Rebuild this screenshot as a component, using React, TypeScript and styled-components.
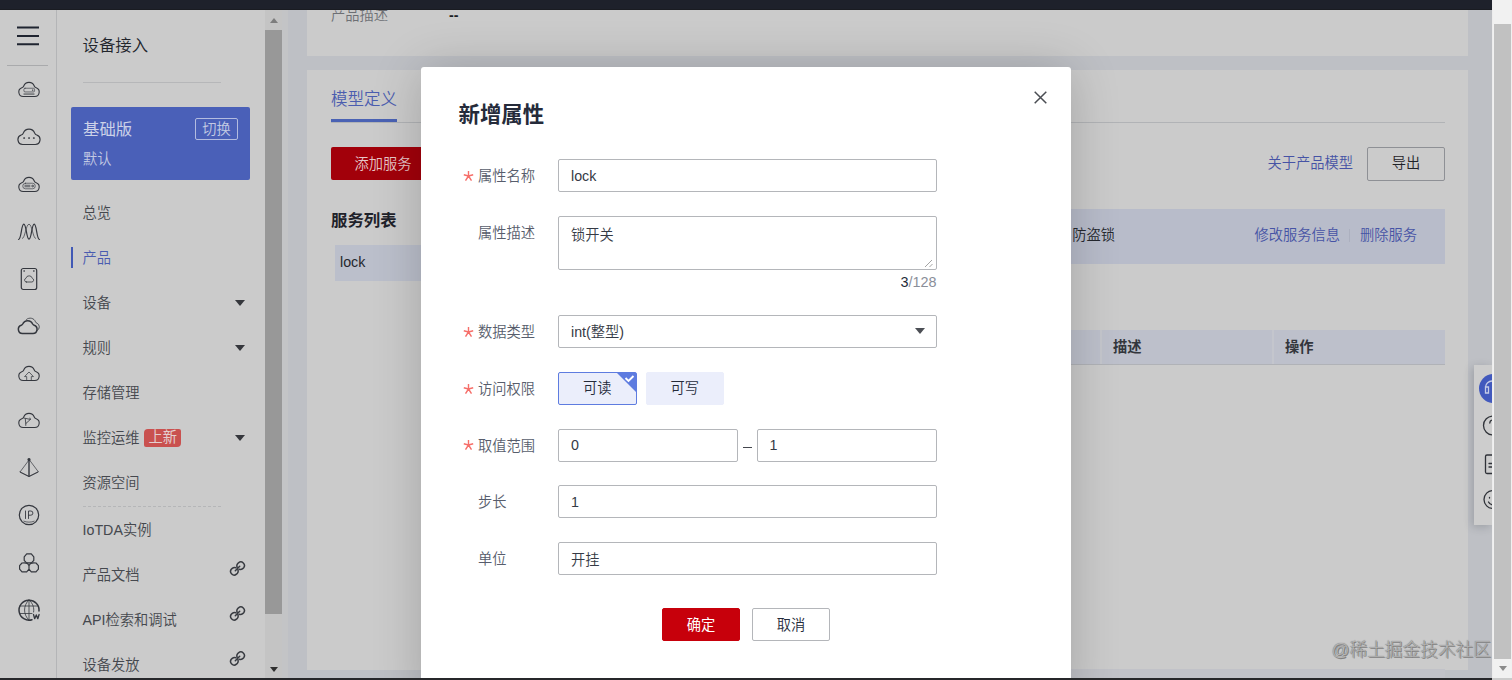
import React from 'react';
import styled, { createGlobalStyle, css } from 'styled-components';

const Global = createGlobalStyle`
  * { box-sizing: border-box; }
  body {
    margin: 0;
    overflow: hidden;
    background: #cbcbcb;
    font-family: 'Liberation Sans', 'Noto Sans CJK SC', sans-serif;
    font-size: 14.25px;
    font-weight: 350;
    color: #3c3f45;
  }
  button, input, textarea { font: inherit; color: inherit; }
`;

const Screen = styled.div`
  position: relative;
  display: flex;
  width: 1512px;
  height: 680px;
  overflow: hidden;
`;

const Page = styled.div`
  display: flex;
  flex-direction: column;
  width: 1492px;
`;

const TopBar = styled.header`
  flex: none;
  height: 10px;
  background: #1e212b;
  border-bottom: 1px solid #1a1c22;
`;

const Body = styled.div`
  display: flex;
  height: 668px;
  overflow: hidden;
`;

const BottomEdge = styled.div`
  flex: none;
  height: 2px;
  background: #26272a;
`;

/* Icon rail */

const Rail = styled.nav`
  flex: none;
  display: flex;
  flex-direction: column;
  align-items: center;
  width: 57px;
  padding-right: 1px;
  border-right: 1px solid #b4b5b7;
`;

const RailToggle = styled.div`
  display: flex;
  justify-content: center;
  width: 41px;
  height: 56px;
  margin-bottom: 0.5px;
  padding-top: 16px;
  border-bottom: 1px solid #a9aaac;
`;

const RailItem = styled.div`
  flex: none;
  display: flex;
  align-items: center;
  justify-content: center;
  height: 47.25px;
  padding-left: 3px;
  color: #34373e;
`;

/* Side menu */

const Side = styled.aside`
  flex: none;
  width: 208px;
  overflow: hidden;
`;

const SideTitle = styled.h1`
  height: 73px;
  width: 138px;
  margin: 0 0 24px 25.5px;
  border-bottom: 1px solid #b6b7b9;
  font-size: 16.4px;
  font-weight: 350;
  line-height: 71px;
  color: #22252c;
`;

const Instance = styled.div`
  display: flex;
  justify-content: space-between;
  width: 179px;
  height: 73px;
  margin: 0 0 10px 14px;
  padding: 10px 12px 0;
  border-radius: 2px;
  background: #4a60b8;
  color: #c3cae3;
`;

const InstanceName = styled.div`
  font-size: 16.4px;
  font-weight: 400;
  line-height: 25px;
  color: #ccd2e8;
`;

const InstanceSub = styled.div`
  line-height: 35px;
`;

const Switch = styled.button`
  width: 43px;
  height: 22px;
  margin-top: 1px;
  padding: 0;
  border: 1px solid #b3bce0;
  border-radius: 2px;
  background: none;
  line-height: 20px;
`;

const MenuItem = styled.div<{ $active?: boolean }>`
  display: flex;
  align-items: center;
  height: 45px;
  padding: 0 20px 3px 25.5px;
  color: #45484e;
  white-space: nowrap;
  ${(p) =>
    p.$active &&
    css`
      color: #4a5cb0;
      padding-left: 14px;
      &::before {
        content: '';
        width: 2px;
        height: 21px;
        margin: 2px 9.5px 0 0;
        background: #4159b5;
      }
    `}
`;

const MenuTail = styled.span`
  display: flex;
  margin-left: auto;
  padding-top: 3px;
`;

const Caret = styled.i`
  border: 5px solid transparent;
  border-top: 6px solid #35373c;
  border-bottom: 0;
`;

const NewTag = styled.span`
  height: 18px;
  margin: 3px 0 0 4px;
  padding: 0 4px 0 5px;
  border-radius: 4px 2px 4px 2px;
  background: #c9514f;
  color: #e4cfcf;
  font-weight: 400;
  line-height: 17px;
`;

const MenuDivider = styled.div`
  width: 138px;
  margin: 1px 0 0 26px;
  border-top: 1px dashed #b5b6b8;
`;

const SideScroll = styled.div`
  flex: none;
  display: flex;
  flex-direction: column;
  align-items: center;
  width: 17px;
  padding: 8px 0 6px;
  background: #c4c4c4;
`;

const Thumb = styled.div`
  width: 17px;
  height: 584px;
  margin: 7px 0 auto;
  background: #989898;
`;

const ScrollArrow = styled.i<{ $up?: boolean; $color: string }>`
  border: 4.5px solid transparent;
  ${(p) =>
    p.$up
      ? css`border-bottom: 5px solid ${p.$color}; border-top: 0;`
      : css`border-top: 5px solid ${p.$color}; border-bottom: 0;`}
`;

/* Content */

const Content = styled.main`
  flex: 1;
  display: flex;
  flex-direction: column;
  gap: 14px;
  padding: 0 24px 0 19px;
  border-left: 6px solid #c3c4c6;
  background: #bec0c5;
`;

const Summary = styled.section`
  flex: none;
  display: flex;
  gap: 61px;
  height: 46px;
  padding-left: 24px;
  overflow: hidden;
  background: #cbcbcb;
  line-height: 20px;
  color: #6d6f74;
`;

const SummaryText = styled.span<{ $dark?: boolean }>`
  margin-top: -5px;
  ${(p) => p.$dark && css`color: #1c1e24; font-weight: 700;`}
`;

const ModelCard = styled.section`
  flex: none;
  height: 600px;
  padding: 0 23px 0 24px;
  background: #cbcbcb;
`;

const Tabs = styled.div`
  display: flex;
  height: 53px;
  border-bottom: 1px solid #b1b3b6;
`;

const Tab = styled.div`
  height: 52px;
  border-bottom: 3px solid #4a62b4;
  font-size: 16.5px;
  line-height: 58px;
  color: #4b5daf;
`;

const ToolRow = styled.div`
  display: flex;
  align-items: center;
  height: 33px;
  margin-top: 24px;
`;

const AddButton = styled.button`
  width: 106px;
  height: 33px;
  padding: 0 2px 3px 0;
  border: 0;
  border-radius: 2px;
  background: #a2000a;
  color: #e6c6c8;
`;

const Link = styled.a<{ $push?: boolean }>`
  margin-left: ${(p) => (p.$push ? 'auto' : 0)};
  padding-bottom: 4px;
  color: #4653a5;
`;

const ExportButton = styled.button`
  width: 78px;
  height: 34px;
  margin-left: 14px;
  padding: 0 0 4px;
  border: 1px solid #8e9095;
  border-radius: 2px;
  background: none;
  color: #1f2228;
`;

const Split = styled.div`
  display: flex;
  gap: 20px;
`;

const ServiceColumn = styled.div`
  width: 170px;
`;

const ServiceHeading = styled.h2`
  margin: 0;
  height: 65px;
  font-size: 16.4px;
  font-weight: 700;
  line-height: 80px;
  color: #1f222a;
`;

const ServiceRow = styled.div`
  height: 36px;
  margin-left: 4px;
  padding-left: 5px;
  background: #bbbfcb;
  line-height: 34px;
  color: #25282e;
`;

const DetailColumn = styled.div`
  flex: 1;
  padding-top: 29px;
`;

const DetailBar = styled.div`
  display: flex;
  align-items: center;
  height: 55px;
  padding: 0 28px 2px 0;
  background: #b8bcca;
  color: #25282e;
`;

const DetailName = styled.span`
  width: 594px;
  padding-bottom: 4px;
  text-align: right;
`;

const LinkGap = styled.span`
  width: 1px;
  height: 13px;
  margin: 0 9.5px;
  background: #acb0bf;
`;

const PropertyTable = styled.div`
  display: grid;
  grid-template-columns: 581px 172px 1fr;
  height: 35px;
  margin-top: 66px;
  background: #bdc0cb;
  border-bottom: 1px solid #b0b2b7;
`;

const HeadCell = styled.div`
  padding-left: 11px;
  border-right: 2px solid #c4c6cd;
  font-weight: 700;
  line-height: 34px;
  color: #33363c;
  &:last-child { border-right: 0; }
`;

const TableFoot = styled.div`
  height: 10px;
  margin-top: 304px;
  background: #c1c2c8;
`;

/* Browser scrollbar */

const WindowScroll = styled.div`
  display: flex;
  flex-direction: column;
  align-items: center;
  width: 20px;
  height: 678px;
  padding: 24px 0 7px;
  border-left: 1px solid #ededed;
  background: #f1f1f1;
`;

const WindowThumb = styled.div`
  width: 17px;
  height: 635px;
  margin-bottom: auto;
  background: #c1c1c1;
`;

/* Floating help bar */

const HelpBar = styled.div`
  position: absolute;
  left: 1474px;
  top: 365px;
  width: 18px;
  height: 160px;
  overflow: hidden;
  background: #cdcdcd;
`;

const HelpShadow = styled.div`
  position: absolute;
  left: 1474px;
  top: 365px;
  width: 18px;
  height: 160px;
  box-shadow: -2px 2px 8px rgba(40, 44, 56, 0.22);
  clip-path: inset(-16px 0 -16px -16px);
`;

/* Dialog */

const DialogLayer = styled.div`
  position: absolute;
  left: 421px;
  top: 67px;
  width: 650px;
  height: 611px;
  clip-path: inset(-60px -80px 0 -80px);
`;

const Dialog = styled.form`
  height: 640px;
  padding: 0 37px 0 37.5px;
  border-radius: 3px;
  background: #fff;
  box-shadow: 0 2px 50px rgba(0, 0, 0, 0.2);
`;

const DialogHead = styled.div`
  display: flex;
  justify-content: space-between;
  height: 92px;
`;

const DialogTitle = styled.h2`
  margin: 0;
  font-size: 21.4px;
  font-weight: 700;
  line-height: 97px;
  color: #252b3a;
`;

const CloseButton = styled.button`
  width: 13px;
  height: 13px;
  margin: 24px -13px 0 0;
  padding: 0;
  border: 0;
  background: none;
`;

const CloseIcon = styled.svg`
  display: block;
`;

const Field = styled.div<{ $gap?: number }>`
  display: grid;
  grid-template-columns: 99.5px 378.5px;
  align-items: start;
  margin-bottom: ${(p) => p.$gap ?? 24}px;
`;

const Label = styled.label`
  display: flex;
  align-items: center;
  height: 33px;
  padding-bottom: 2px;
  color: #575d6c;
`;

const Star = styled.span`
  display: flex;
  width: 19.5px;
  padding: 2px 0 0 4.5px;
`;

const controlBox = css`
  border: 1px solid #b4b6ba;
  border-radius: 2px;
  background: #fff;
  color: #353a45;
`;

const Input = styled.input`
  ${controlBox}
  width: 100%;
  height: 33px;
  padding: 0 12px;
`;

const TextBox = styled.div`
  ${controlBox}
  display: flex;
  justify-content: space-between;
  height: 54px;
  padding: 7px 2px 1px 12px;
  line-height: 22px;
`;

const Grip = styled.svg`
  align-self: flex-end;
`;

const Counter = styled.div`
  height: 21px;
  text-align: right;
  font-size: 14.4px;
  line-height: 24px;
  color: #8a8e99;
`;

const CountNow = styled.span`
  color: #252b3a;
`;

const Select = styled.div`
  ${controlBox}
  display: flex;
  align-items: center;
  justify-content: space-between;
  height: 33px;
  padding: 0 11px 2px 12px;
`;

const SelectCaret = styled(Caret)`
  border-top-color: #4c4f55;
`;

const Options = styled.div`
  display: flex;
  gap: 9px;
`;

const Option = styled.div<{ $on?: boolean }>`
  position: relative;
  width: 78.5px;
  height: 33px;
  border: 1px solid ${(p) => (p.$on ? '#5e7ce0' : '#ebeefb')};
  border-radius: 2px;
  background: #ebeefb;
  text-align: center;
  line-height: 30px;
  color: #252b3a;
`;

const OptionMark = styled.svg`
  position: absolute;
  top: 0;
  right: 0;
`;

const Range = styled.div`
  display: grid;
  grid-template-columns: 180px 1fr 180px;
  align-items: center;
`;

const Dash = styled.span`
  width: 9px;
  height: 1px;
  margin: 4px auto 0;
  background: #44474e;
`;

const Actions = styled.div`
  display: flex;
  gap: 12px;
  margin: 33px 0 0 203.5px;
`;

const ActionButton = styled.button<{ $primary?: boolean }>`
  width: 78px;
  height: 33px;
  padding: 0 0 3px;
  border: 1px solid ${(p) => (p.$primary ? '#c7000b' : '#b4b6ba')};
  border-radius: 2px;
  background: ${(p) => (p.$primary ? '#c7000b' : '#fff')};
  color: ${(p) => (p.$primary ? '#fff' : '#252b3a')};
  font-weight: ${(p) => (p.$primary ? 400 : 350)};
`;

const Watermark = styled.div`
  position: absolute;
  right: 21px;
  bottom: 17px;
  font-size: 17.7px;
  font-weight: 300;
  line-height: 26px;
  white-space: nowrap;
  color: #b4b4b4;
  text-shadow: 0 0 1px #666, 1px 1px 0 #858585;
`;

const Glyph = ({ children, box = '0 0 24 24' }: { children: React.ReactNode; box?: string }) => (
  <svg width="24" height="24" viewBox={box} fill="none" stroke="currentColor" strokeWidth="1.200" strokeLinejoin="round" strokeLinecap="round">
    {children}
  </svg>
);

const Cloud = ({ children, wide }: { children?: React.ReactNode; wide?: boolean }) => (
  <Glyph box={wide ? '0 0 24 24' : '-1 -.6 26 26'}>
    <path d="M5.700 19.500h12.600a4.900 4.900 0 0 0 1.500-9.500c-1.200-.3-1.700-.8-2.100-1.900a6.100 6.100 0 0 0-11.400 0c-.4 1.100-.9 1.600-2.100 1.900a4.900 4.900 0 0 0 1.500 9.500z" />
    {children}
  </Glyph>
);

const railIcons: React.ReactNode[] = [
  <Cloud key="host">
    <rect x="6.500" y="10.500" width="11.500" height="4" rx="1.200" strokeWidth=".7" />
    <path d="M15.800 12.500h.4" />
    <path d="M6.500 16.800h11" strokeWidth="1" />
  </Cloud>,
  <Cloud key="more" wide>
    <path d="M7 13h.3M11.900 13h.3M16.700 13h.3" strokeWidth="1.700" />
  </Cloud>,
  <Cloud key="server">
    <rect x="5.200" y="10.500" width="13.600" height="6" rx="3" strokeWidth=".7" />
    <path d="M7.500 12.700h5.500M7.500 14.300h5.500" strokeWidth=".8" />
    <circle cx="15.800" cy="13.500" r=".9" strokeWidth=".8" />
  </Cloud>,
  <Glyph key="wave">
    <path d="M1.500 19.500c3 0 2.700-15.300 5.300-15.300s2.600 15 5.200 15 2.600-15 5.200-15 2.300 15.300 5.300 15.300" />
    <path d="M5.500 18.500C8 18.500 9 4.200 12 4.200s4 14.300 6.500 14.300" strokeWidth=".7" />
  </Glyph>,
  <Glyph key="device">
    <rect x="4.300" y="1.500" width="15.400" height="21" rx="2" />
    <path d="M7 4h.3M16.700 4h.3" strokeWidth="1.400" />
    <path d="M9.300 15h5.600a1.900 1.900 0 0 0 .4-3.700 3.300 3.300 0 0 0-6.400 0A1.900 1.900 0 0 0 9.300 15z" strokeWidth=".8" />
  </Glyph>,
  <Glyph key="clouds">
    <path d="M5.400 19.500h10.600a4.200 4.200 0 0 0 1.100-8.200c-.8-.2-1-.5-1.400-1.300a5.400 5.400 0 0 0-10 0c-.4.800-.6 1.100-1.400 1.300a4.200 4.200 0 0 0 1.100 8.200z" strokeWidth="1.500" />
    <path d="M9.500 5.400a5.600 5.600 0 0 1 9 2.500c.3.700.6 1 1.300 1.200a4.200 4.200 0 0 1 .2 7.600" strokeWidth=".8" />
  </Glyph>,
  <Cloud key="upload">
    <path d="M9.500 19v-3.800H7.200L12 10.200l4.800 5h-2.300V19" strokeWidth=".8" />
  </Cloud>,
  <Cloud key="function">
    <path d="M6.500 9.200l7 1.500-5 4.500-.5-5M8.500 15.200v2M13.500 10.700l-.5-1.500" strokeWidth=".9" />
  </Cloud>,
  <Glyph key="pyramid">
    <path d="M12 4L3 16l9 4.500L21 16z" strokeWidth=".7" />
    <path d="M12 4v16" strokeWidth="1.400" />
    <circle cx="12" cy="3.600" r="1" fill="currentColor" />
    <path d="M3 16l9 4.500L21 16" strokeWidth=".9" />
  </Glyph>,
  <Glyph key="ip">
    <circle cx="12" cy="12" r="9.700" />
    <path d="M8.500 8v7.500M11.500 15.500V8h2.300a2.100 2.100 0 0 1 0 4.200h-2.300" strokeWidth=".9" />
    <path d="M6.800 18.200c3 1.300 7.400 1.300 10.400 0" strokeWidth=".7" />
  </Glyph>,
  <Glyph key="hexes">
    <path d="M9.700 2.900h4.600l2.500 2.900v3.500l-2.300 2.600h-5L7.200 9.300V5.800z" />
    <path d="M7.200 11.900l3.300.5L12 14.800v3.400L9.700 20.800H5L2.600 18.200v-3.600L5 12zM16.800 11.900l-3.300.5L12 14.800v3.400l2.300 2.600H19l2.400-2.600v-3.600L19 12z" />
  </Glyph>,
  <Glyph key="globe">
    <path d="M15 21.700A10 10 0 1 1 22 13" strokeWidth="1.500" />
    <path d="M12 2v20M3 8h18M3 15.500h12M12 2c-6 5-6 15 0 20M12 2c4 3.300 5.300 8 4.600 12" strokeWidth=".8" />
    <path d="M16.500 16.500l1.200 4.200 1.600-3.800 1.500 3.800 1.300-4.200" strokeWidth="1.300" />
  </Glyph>,
];

const LinkIcon = () => (
  <svg width="17" height="17" viewBox="0 0 17 17" fill="none" stroke="#383b41" strokeWidth="1.500" strokeLinecap="round">
    <path d="M8.200 7.400a3.400 3.400 0 0 1 .4-3.600l.9-1a3.600 3.600 0 0 1 5.200 4.900l-1 .9a3.400 3.400 0 0 1-3.500.7" />
    <path d="M8.800 9.600a3.400 3.400 0 0 1-.4 3.600l-.9 1a3.600 3.600 0 0 1-5.200-4.900l1-.9a3.400 3.400 0 0 1 3.500-.7" />
    <path d="M6.300 10.700l4.400-4.400" />
  </svg>
);

const menu: { text: string; active?: boolean; caret?: boolean; tag?: string }[] = [
  { text: '总览' },
  { text: '产品', active: true },
  { text: '设备', caret: true },
  { text: '规则', caret: true },
  { text: '存储管理' },
  { text: '监控运维', caret: true, tag: '上新' },
  { text: '资源空间' },
];

const links = ['产品文档', 'API检索和调试', '设备发放'];

const LinkTail = styled(MenuTail)`
  padding: 0 0 10px;
  margin-right: -1px;
`;

const FieldLabel = ({ text, required }: { text: string; required?: boolean }) => (
  <Label>
    <Star>
      {required && (
        <svg width="11" height="12" viewBox="0 0 11 12" stroke="#f66f6a" strokeWidth="1.400">
          <path d="M5.500 1v5M.8 4.800l4.700 1.200M10.200 4.800L5.500 6M2.500 10.600l3-4.600M8.500 10.600l-3-4.600" />
        </svg>
      )}
    </Star>
    {text}
  </Label>
);

export default function App() {
  return (
    <Screen>
      <Global />
      <Page>
        <TopBar />
        <Body>
          <Rail>
            <RailToggle>
              <svg width="22" height="20" viewBox="0 0 22 20" stroke="#1f2430" strokeWidth="2">
                <path d="M0 1.500h22M0 10h22M0 18.300h22" />
              </svg>
            </RailToggle>
            {railIcons.map((icon, i) => (
              <RailItem key={i}>{icon}</RailItem>
            ))}
          </Rail>
          <Side>
            <SideTitle>设备接入</SideTitle>
            <Instance>
              <div>
                <InstanceName>基础版</InstanceName>
                <InstanceSub>默认</InstanceSub>
              </div>
              <Switch>切换</Switch>
            </Instance>
            {menu.map((m) => (
              <MenuItem key={m.text} $active={m.active}>
                {m.text}
                {m.tag && <NewTag>{m.tag}</NewTag>}
                {m.caret && (
                  <MenuTail>
                    <Caret />
                  </MenuTail>
                )}
              </MenuItem>
            ))}
            <MenuDivider />
            <MenuItem>IoTDA实例</MenuItem>
            {links.map((text) => (
              <MenuItem key={text}>
                {text}
                <LinkTail>
                  <LinkIcon />
                </LinkTail>
              </MenuItem>
            ))}
          </Side>
          <SideScroll>
            <ScrollArrow $up $color="#7d7d7d" />
            <Thumb />
            <ScrollArrow $color="#2f2f2f" />
          </SideScroll>
          <Content>
            <Summary>
              <SummaryText>产品描述</SummaryText>
              <SummaryText $dark>--</SummaryText>
            </Summary>
            <ModelCard>
              <Tabs>
                <Tab>模型定义</Tab>
              </Tabs>
              <ToolRow>
                <AddButton>添加服务</AddButton>
                <Link $push>关于产品模型</Link>
                <ExportButton>导出</ExportButton>
              </ToolRow>
              <Split>
                <ServiceColumn>
                  <ServiceHeading>服务列表</ServiceHeading>
                  <ServiceRow>lock</ServiceRow>
                </ServiceColumn>
                <DetailColumn>
                  <DetailBar>
                    <DetailName>防盗锁</DetailName>
                    <Link $push>修改服务信息</Link>
                    <LinkGap />
                    <Link>删除服务</Link>
                  </DetailBar>
                  <PropertyTable>
                    <HeadCell />
                    <HeadCell>描述</HeadCell>
                    <HeadCell>操作</HeadCell>
                  </PropertyTable>
                  <TableFoot />
                </DetailColumn>
              </Split>
            </ModelCard>
          </Content>
        </Body>
        <BottomEdge />
      </Page>
      <WindowScroll>
        <WindowThumb />
        <ScrollArrow $color="#8b8b8b" />
      </WindowScroll>

      <HelpShadow />
      <HelpBar>
        <svg width="18" height="160" viewBox="0 0 18 160" fill="none" stroke="#2f3238" strokeWidth="1.300" strokeLinecap="round">
          <circle cx="19.500" cy="23.500" r="14.500" fill="#4259bd" stroke="none" />
          <path d="M11.500 27v-5a6.500 6.500 0 0 1 6.500-6M11.500 22h3v6h-3z" stroke="#c5cbe6" />
          <circle cx="19" cy="60.500" r="9.500" />
          <path d="M15.800 58a3.200 3.200 0 0 1 3.200-3" />
          <rect x="11.500" y="90" width="15" height="18.500" rx="1.500" />
          <path d="M15 98.500h6M15 102h6" />
          <circle cx="19" cy="134.500" r="9" />
          <path d="M15.500 132.500v.6M14.500 137a5 5 0 0 0 4.500 2.800" />
        </svg>
      </HelpBar>

      <DialogLayer>
        <Dialog>
          <DialogHead>
            <DialogTitle>新增属性</DialogTitle>
            <CloseButton type="button">
              <CloseIcon width="13" height="13" viewBox="0 0 13 13" stroke="#4a4d53" strokeWidth="1.500">
                <path d="M.7.700l11.600 11.600M12.300.700L.7 12.300" />
              </CloseIcon>
            </CloseButton>
          </DialogHead>
          <Field>
            <FieldLabel text="属性名称" required />
            <Input defaultValue="lock" />
          </Field>
          <Field>
            <FieldLabel text="属性描述" />
            <div>
              <TextBox>
                锁开关
                <Grip width="10" height="10" viewBox="0 0 10 10" stroke="#9a9a9a" strokeWidth=".9">
                  <path d="M1 9l7-7M5.500 9L8.500 6" />
                </Grip>
              </TextBox>
              <Counter>
                <CountNow>3</CountNow>/128
              </Counter>
            </div>
          </Field>
          <Field>
            <FieldLabel text="数据类型" required />
            <Select>
              int(整型)
              <SelectCaret />
            </Select>
          </Field>
          <Field $gap={23.5}>
            <FieldLabel text="访问权限" required />
            <Options>
              <Option $on>
                可读
                <OptionMark width="19" height="19" viewBox="0 0 19 19">
                  <path d="M0 0h19v19z" fill="#5e7ce0" />
                  <path d="M8.500 5l3 3L16.500 3" fill="none" stroke="#fff" strokeWidth="1.900" />
                </OptionMark>
              </Option>
              <Option>可写</Option>
            </Options>
          </Field>
          <Field $gap={23.5}>
            <FieldLabel text="取值范围" required />
            <Range>
              <Input defaultValue="0" />
              <Dash />
              <Input defaultValue="1" />
            </Range>
          </Field>
          <Field>
            <FieldLabel text="步长" />
            <Input defaultValue="1" />
          </Field>
          <Field $gap={0}>
            <FieldLabel text="单位" />
            <Input defaultValue="开挂" />
          </Field>
          <Actions>
            <ActionButton type="button" $primary>
              确定
            </ActionButton>
            <ActionButton type="button">取消</ActionButton>
          </Actions>
        </Dialog>
      </DialogLayer>
      <Watermark>@稀土掘金技术社区</Watermark>
    </Screen>
  );
}
